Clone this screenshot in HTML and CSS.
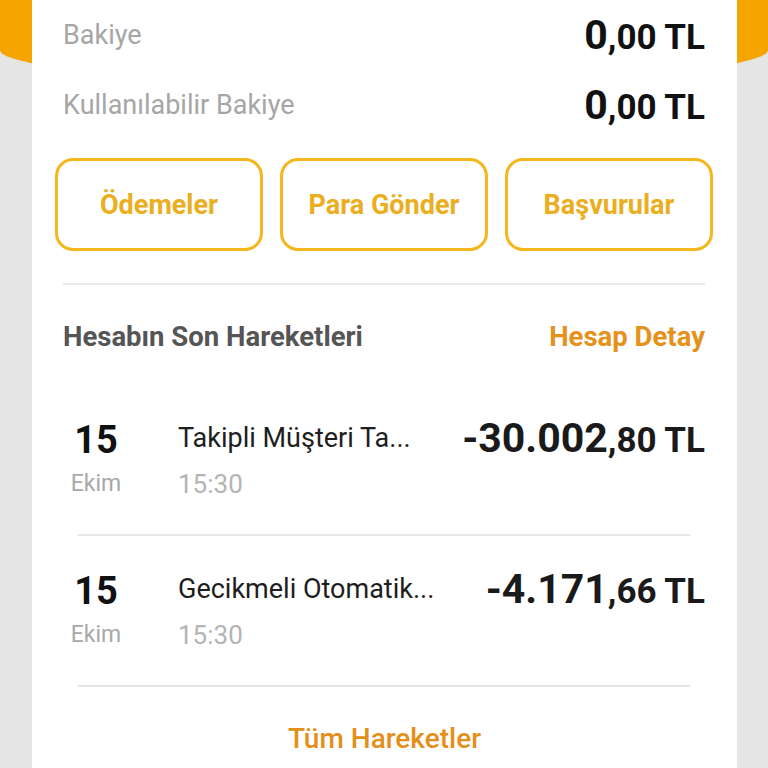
FILE: index.html
```html
<!DOCTYPE html>
<html lang="tr">
<head>
  <meta charset="utf-8">
  <meta name="viewport" content="width=device-width">
  <title>Hesabım</title>
  <link rel="stylesheet" href="styles.css">
</head>
<body>
  <div class="top-band"></div>

  <main class="card">
    <div class="balance-row">
      <span class="balance-label">Bakiye</span>
      <span class="balance-amount"><span class="big">0</span>,00 TL</span>
    </div>
    <div class="balance-row">
      <span class="balance-label">Kullanılabilir Bakiye</span>
      <span class="balance-amount"><span class="big">0</span>,00 TL</span>
    </div>

    <div class="actions">
      <a class="action-btn" href="#">Ödemeler</a>
      <a class="action-btn" href="#">Para Gönder</a>
      <a class="action-btn" href="#">Başvurular</a>
    </div>

    <div class="divider"></div>

    <div class="section-head">
      <span class="section-title">Hesabın Son Hareketleri</span>
      <a class="section-link" href="#">Hesap Detay</a>
    </div>

    <div class="tx-list">
      <div class="tx">
        <div class="tx-date">
          <span class="day">15</span>
          <span class="month">Ekim</span>
        </div>
        <div class="tx-desc">
          <span class="tx-title">Takipli Müşteri Ta...</span>
          <span class="tx-time">15:30</span>
        </div>
        <div class="tx-amount"><span class="big">-30.002</span>,80 TL</div>
      </div>
      <div class="tx-divider"></div>

      <div class="tx">
        <div class="tx-date">
          <span class="day">15</span>
          <span class="month">Ekim</span>
        </div>
        <div class="tx-desc">
          <span class="tx-title">Gecikmeli Otomatik...</span>
          <span class="tx-time">15:30</span>
        </div>
        <div class="tx-amount"><span class="big">-4.171</span>,66 TL</div>
      </div>
      <div class="tx-divider"></div>
    </div>

    <a class="all-link" href="#">Tüm Hareketler</a>
  </main>
</body>
</html>
```
FILE: styles.css
```css
html, body {
  margin: 0;
  padding: 0;
}

body {
  background-color: #e5e5e5;
  font-family: Roboto, "Noto Sans", sans-serif;
  min-height: 768px;
  position: relative;
  overflow: hidden;
}

a {
  text-decoration: none;
}

/* turuncu ust bant, kartin arkasinda */
.top-band {
  position: absolute;
  top: 0;
  left: 0;
  width: 768px;
  height: 83px;
  background-color: #f6a500;
  border-radius: 0 0 50% 50% / 0 0 33px 33px;
}

.card {
  position: relative;
  margin: 0 31px 0 32px;
  background: #fff;
  min-height: 768px;
  padding: 0 0 40px;
}

.balance-row {
  display: flex;
  justify-content: space-between;
  align-items: center;
  height: 70px;
  padding: 0 32px 0 31px;
}

.balance-label {
  font-size: 27px;
  color: #a6a6a6;
}

.balance-amount {
  font-size: 35px;
  font-weight: bold;
  color: #111;
}

.balance-amount .big,
.tx-amount .big {
  font-size: 41px;
}

.actions {
  display: flex;
  gap: 17px;
  margin-top: 18px;
  padding: 0 23px;
}

.action-btn {
  width: 208px;
  height: 93px;
  box-sizing: border-box;
  border: 3px solid #f4b71e;
  border-radius: 18px;
  display: flex;
  align-items: center;
  justify-content: center;
  color: #ebae20;
  font-size: 27px;
  font-weight: bold;
}

.divider {
  height: 2px;
  background: #e8e8e8;
  margin: 32px 32px 0 31px;
}

.section-head {
  display: flex;
  justify-content: space-between;
  align-items: center;
  height: 30px;
  margin-top: 36px;
  padding: 0 32px 0 31px;
}

.section-title {
  font-size: 27.5px;
  font-weight: bold;
  color: #555;
}

.section-link {
  font-size: 27.5px;
  font-weight: bold;
  color: #e5921b;
}

.tx-list {
  margin-top: 34px;
  padding: 0 32px 0 31px;
}

.tx {
  display: flex;
  align-items: flex-start;
  padding: 35px 0 35px;
}

.tx-date {
  width: 66px;
  display: flex;
  flex-direction: column;
  align-items: center;
}

.tx-date .day {
  font-size: 38px;
  font-weight: bold;
  line-height: 36px;
  color: #111;
  margin-top: 2px;
}

.tx-date .month {
  font-size: 23px;
  line-height: 30px;
  margin-top: 11px;
  color: #a8a8a8;
}

.tx-desc {
  flex: 1;
  margin-left: 49px;
  display: flex;
  flex-direction: column;
}

.tx-title {
  font-size: 27px;
  line-height: 36px;
  color: #1e1e1e;
}

.tx-time {
  font-size: 26px;
  line-height: 30px;
  margin-top: 13px;
  color: #b4b4b4;
}

.tx-amount {
  font-size: 35px;
  font-weight: bold;
  line-height: 36px;
  color: #1a1a1a;
}

.tx-divider {
  height: 2px;
  background: #e6e6e6;
  margin: 0 15px;
}

.all-link {
  display: block;
  text-align: center;
  margin-top: 35px;
  font-size: 28px;
  font-weight: 500;
  color: #e48f1a;
}
```
